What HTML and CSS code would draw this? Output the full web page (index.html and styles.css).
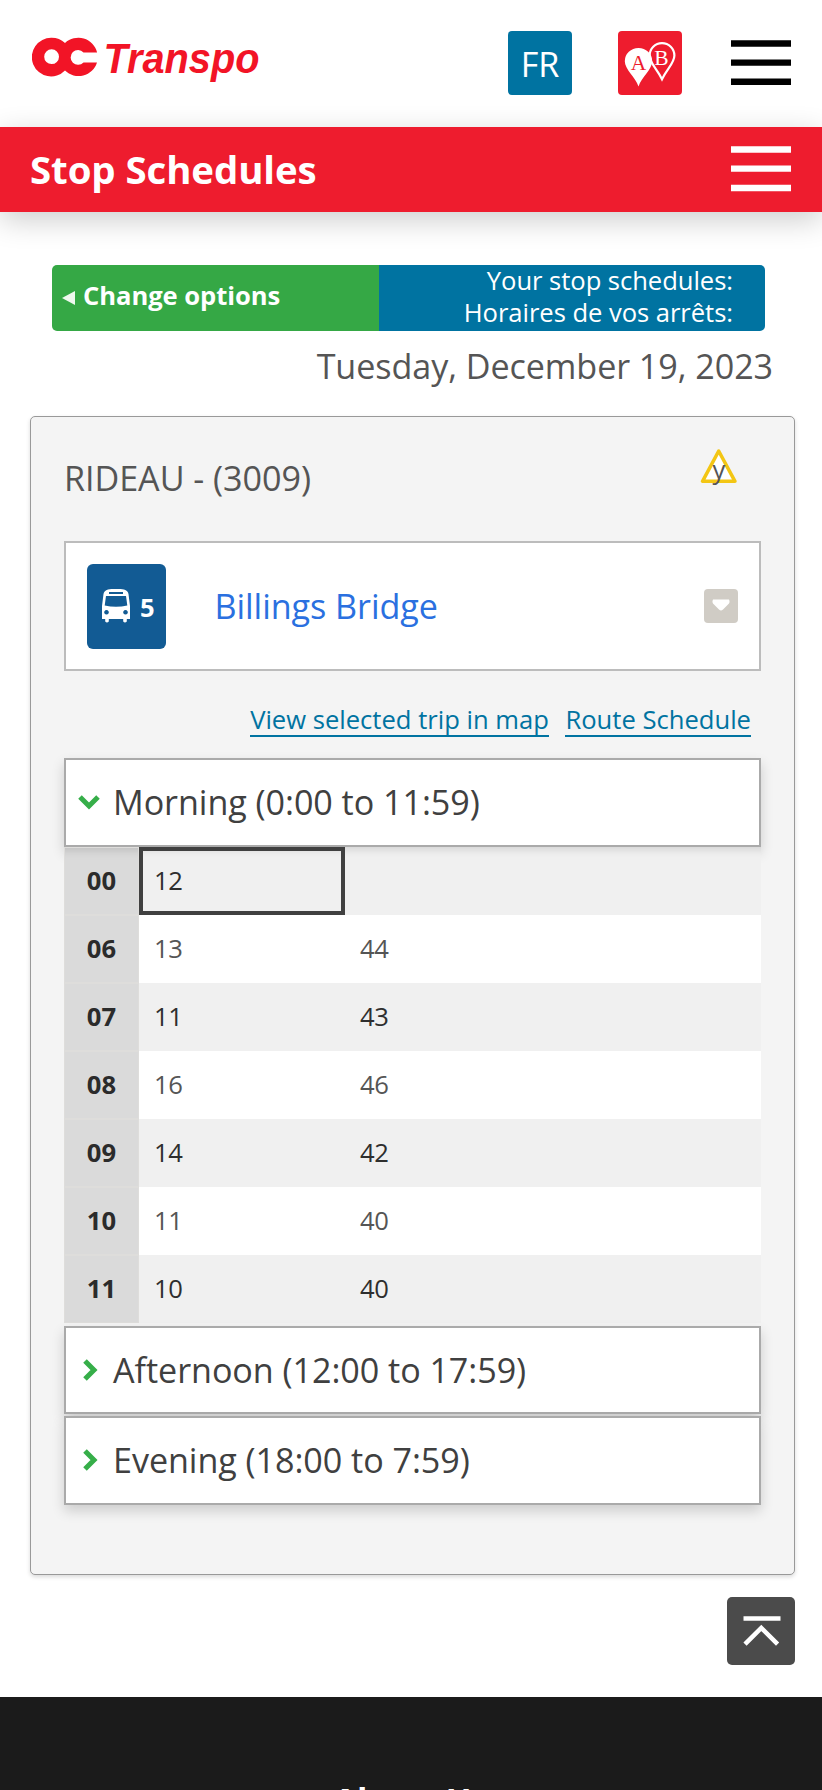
FILE: index.html
```html
<!DOCTYPE html>
<html lang="en">
<head>
<meta charset="utf-8">
<title>Stop Schedules</title>
<link rel="stylesheet" href="styles.css">
</head>
<body>
<header class="top">
  <svg class="logo" width="240" height="60" viewBox="0 0 240 60">
    <path class="red" fill-rule="evenodd" d="M19.600 6.800a19.300 19.300 0 0 1 13.400 5.300a19.300 19.300 0 0 1 32.100 9.300H51.500a7.400 7.400 0 1 0 0 10H65a19.300 19.300 0 0 1-32 8.100A19.300 19.300 0 1 1 19.600 6.800zm0 11.500a7.400 7.400 0 1 0 0 14.800a7.400 7.400 0 0 0 0-14.800z"/>
    <text class="logo-text" x="71.500" y="41.700" textLength="156" lengthAdjust="spacingAndGlyphs">Transpo</text>
  </svg>
  <a class="lang">FR</a>
  <svg class="planner" width="64" height="64" viewBox="0 0 64 64">
    <rect class="red" width="64" height="64" rx="4"/>
    <path class="pin-line" d="M44 48.200C39 38 31.600 32 31.600 24.500a12.400 12.400 0 0 1 24.800 0C56.400 32 49 38 44 48.200z"/>
    <path class="pin" d="M20.500 55.500C17.500 46 6.800 38.500 6.800 30.200a13.700 13.200 0 0 1 27.400 0C34.200 38.500 23.500 46 20.500 55.500z"/>
    <text class="pin-a" x="20.500" y="38.500">A</text>
    <text class="pin-b" x="43.500" y="34.300">B</text>
  </svg>
  <svg class="burger" width="60" height="46" viewBox="0 0 60 46"><path d="M0 .3h60v6.400H0zM0 19.400h60v6.400H0zM0 38.600h60V45H0z"/></svg>
</header>
<div class="title-bar">
  <h1>Stop Schedules</h1>
  <svg class="burger light" width="60" height="46" viewBox="0 0 60 46"><path d="M0 .3h60v6.400H0zM0 19.400h60v6.400H0zM0 38.800h60v6.400H0z"/></svg>
</div>
<main>
  <div class="options">
    <a class="change"><svg width="14" height="18" viewBox="0 0 14 18"><path d="M0 9L13 2v14z"/></svg><span>Change options</span></a>
    <div class="yours"><span>Your stop schedules:</span><span>Horaires de vos arrêts:</span></div>
  </div>
  <p class="date">Tuesday, December 19, 2023</p>
  <section class="card">
    <div class="stop">
      <h2>RIDEAU - (3009)</h2>
      <svg class="access" width="38" height="40" viewBox="0 0 38 40"><path d="M18.700 4L2.500 34.300h32.500z"/><text x="18.800" y="31.500">y</text></svg>
    </div>
    <div class="route">
      <div class="badge">
        <svg width="30" height="34" viewBox="0 0 30 34">
          <path class="w" fill-rule="evenodd" d="M7 .5Q15-1 23 .5Q27 1.500 27.500 5L29 17V30H25.800V32.500Q24 34.500 22.200 32.500V30H7.800V32.500Q6 34.500 4.200 32.500V30H1V17L2.500 5Q3 1.500 7 .5zM8 3v2H22V3zM5 7L3.700 16.500Q15 19 26.300 16.500L25 7zM5.500 21a2.300 2.300 0 1 0 .01 0zM24.500 21a2.300 2.300 0 1 0 .01 0z"/>
        </svg>
        <span>5</span>
      </div>
      <a class="dest">Billings Bridge</a>
      <svg class="drop" width="34" height="34" viewBox="0 0 34 34"><rect width="34" height="34" rx="4"/><path d="M9 10.500h16q1.500 3-1 5l-5 5q-2 2-4 0l-5-5q-2.500-2-1-5z"/></svg>
    </div>
    <nav class="links"><a>View selected trip in map</a><a>Route Schedule</a></nav>
    <div class="period open"><svg width="22" height="22" viewBox="0 0 22 22"><path d="M2 6l9 9 9-9"/></svg><span>Morning (0:00 to 11:59)</span></div>
    <table>
      <tr><th>00</th><td class="picked">12</td><td></td></tr>
      <tr><th>06</th><td>13</td><td>44</td></tr>
      <tr><th>07</th><td>11</td><td>43</td></tr>
      <tr><th>08</th><td>16</td><td>46</td></tr>
      <tr><th>09</th><td>14</td><td>42</td></tr>
      <tr><th>10</th><td>11</td><td>40</td></tr>
      <tr><th>11</th><td>10</td><td>40</td></tr>
    </table>
    <div class="period"><svg width="22" height="22" viewBox="0 0 22 22"><path d="M7 2l9 9-9 9"/></svg><span>Afternoon (12:00 to 17:59)</span></div>
    <div class="period"><svg width="22" height="22" viewBox="0 0 22 22"><path d="M7 2l9 9-9 9"/></svg><span>Evening (18:00 to 7:59)</span></div>
  </section>
  <div class="up-row"><svg width="68" height="68" viewBox="0 0 68 68"><rect width="68" height="68" rx="5"/><path d="M16.500 21.500h37M18 47.200l16.300-16.200 16.300 16.200"/></svg></div>
</main>
<footer><h3>About Us</h3></footer>
</body>
</html>
```
FILE: styles.css
```css
* { box-sizing: border-box; }
html { overflow: hidden; height: 1790px; }
body { margin: 0; height: 1790px; overflow: hidden; background: #fff; color: #555; font-family: "Open Sans", sans-serif; font-size: 34.130px; }
h1, h2, h3, p { margin: 0; font-weight: 400; }
svg { display: block; flex: none; }
.red { fill: #ee1c2e; }
.top { display: flex; align-items: flex-start; height: 126.500px; padding: 30.500px 31px 0 32px; }
.logo { margin-right: 236px; }
.logo .red { fill: #f21426; }
.logo-text { font: italic bold 43px "Liberation Sans", sans-serif; fill: #f21426; }
.lang { flex: none; width: 64px; height: 64px; border-radius: 4px; background: #0073a1; color: #fff; font-size: 34.130px; line-height: 66px; text-align: center; }
.planner { margin-left: 46.300px; }
.pin { fill: #fff; }
.pin-line { fill: none; stroke: #fff; stroke-width: 2.200; }
.pin-a, .pin-b { font: 21.500px "Liberation Serif", serif; text-anchor: middle; fill: #ee1c2e; }
.pin-b { fill: #fff; }
.burger { margin: 9.500px 0 0 auto; }
.light { fill: #fff; margin-top: 19px; }
.title-bar { position: relative; display: flex; height: 85px; padding: 0 31px 0 30px; background: #ee1c2e; box-shadow: 0 8px 30px rgba(0,0,0,.2); }
h1 { color: #fff; font-weight: 700; font-size: 38.400px; line-height: 85px; letter-spacing: -.08px; white-space: nowrap; }
main { padding: 53px 27px 0 30px; }
.options { display: flex; height: 66px; margin: 0 30px 0 22px; border-radius: 5px; overflow: hidden; color: #fff; font-size: 25.600px; }
.change { display: flex; align-items: center; width: 326.500px; padding: 0 0 4px 10px; background: #35a845; font-weight: 700; letter-spacing: -.05px; }
.change svg { fill: #eef8ee; margin: 4px 7px 0 0; }
.yours { flex: 1; padding: 0 32px 0 0; background: #0073a1; text-align: right; letter-spacing: -.05px; }
.yours span { display: block; line-height: 32px; }
.date { height: 85.500px; padding: 10px 22px 0 0; line-height: 50px; text-align: right; letter-spacing: -.08px; }
.card { height: 1159px; padding: 0 33px; border: 1.500px solid #999; border-radius: 5px; background: #f4f4f4; box-shadow: 0 2px 4px rgba(0,0,0,.15); }
.stop { display: flex; justify-content: space-between; height: 123.500px; padding: 30px 23px 0 0; }
h2 { font-size: 34.130px; line-height: 63px; letter-spacing: -.05px; }
.access path { fill: #fff; stroke: #f3c614; stroke-width: 3.500; stroke-linejoin: round; }
.access text { font: 25.600px "Open Sans", sans-serif; text-anchor: middle; fill: #555; }
.route { display: flex; align-items: center; height: 130.500px; padding: 1px 21px 0; border: 2px solid #bcbcbc; background: #fff; }
.badge { display: flex; align-items: center; width: 78.500px; height: 85px; padding-left: 14px; border-radius: 6px; background: #125b94; color: #fff; font-weight: 700; font-size: 25.600px; }
.badge span { margin: 2px 0 0 9px; }
.w { fill: #fff; }
.dest { flex: 1; margin-left: 49px; color: #2a70e0; letter-spacing: -.06px; }
.drop rect { fill: #d0ccc5; }
.drop path { fill: #fff; }
.links { display: flex; justify-content: flex-end; height: 87px; padding: 30px 10px 0 0; gap: 16.500px; font-size: 25.600px; }
.links a { height: 36px; line-height: 38px; color: #0073a1; border-bottom: 2px solid #0073a1; white-space: nowrap; }
.period { display: flex; align-items: center; height: 88.500px; padding-left: 12px; border: 2px solid #aaa; background: #fff; color: #404040; box-shadow: 0 6px 12px rgba(0,0,0,.16); letter-spacing: -.06px; }
.period + .period { margin-top: 2px; }
.period svg { margin-right: 13px; }
.period path { fill: none; stroke: #36ae49; stroke-width: 5; }
table { width: 100%; border-collapse: separate; border-spacing: 0; table-layout: fixed; margin-bottom: 3px; font-size: 25.600px; }
th { width: 75px; padding: 0; background: #dadada; border: 1px solid #dedddb; color: #2b2b2b; font-weight: 700; }
tr { height: 68px; background: #fff; }
tr:nth-child(odd) { background: #f0f0f0; }
tr:nth-child(odd) td { color: #2e2e2e; }
td { padding: 0 0 0 15px; letter-spacing: -.3px; }
td:nth-child(2) { width: 206px; }
.picked { outline: 4px solid #404040; outline-offset: -4px; }
tr:first-child > * { box-shadow: inset 0 10px 9px -8px rgba(0,0,0,.14); }
.up-row { display: flex; justify-content: flex-end; height: 121.500px; padding-top: 21.500px; }
.up-row rect { fill: #4b4b4b; }
.up-row path { fill: none; stroke: #fff; stroke-width: 4.500; }
footer { height: 94px; overflow: hidden; background: #1b1b1b; color: #fff; text-align: center; padding-top: 78px; }
h3 { font-size: 34.130px; font-weight: 700; line-height: 50px; }
```
